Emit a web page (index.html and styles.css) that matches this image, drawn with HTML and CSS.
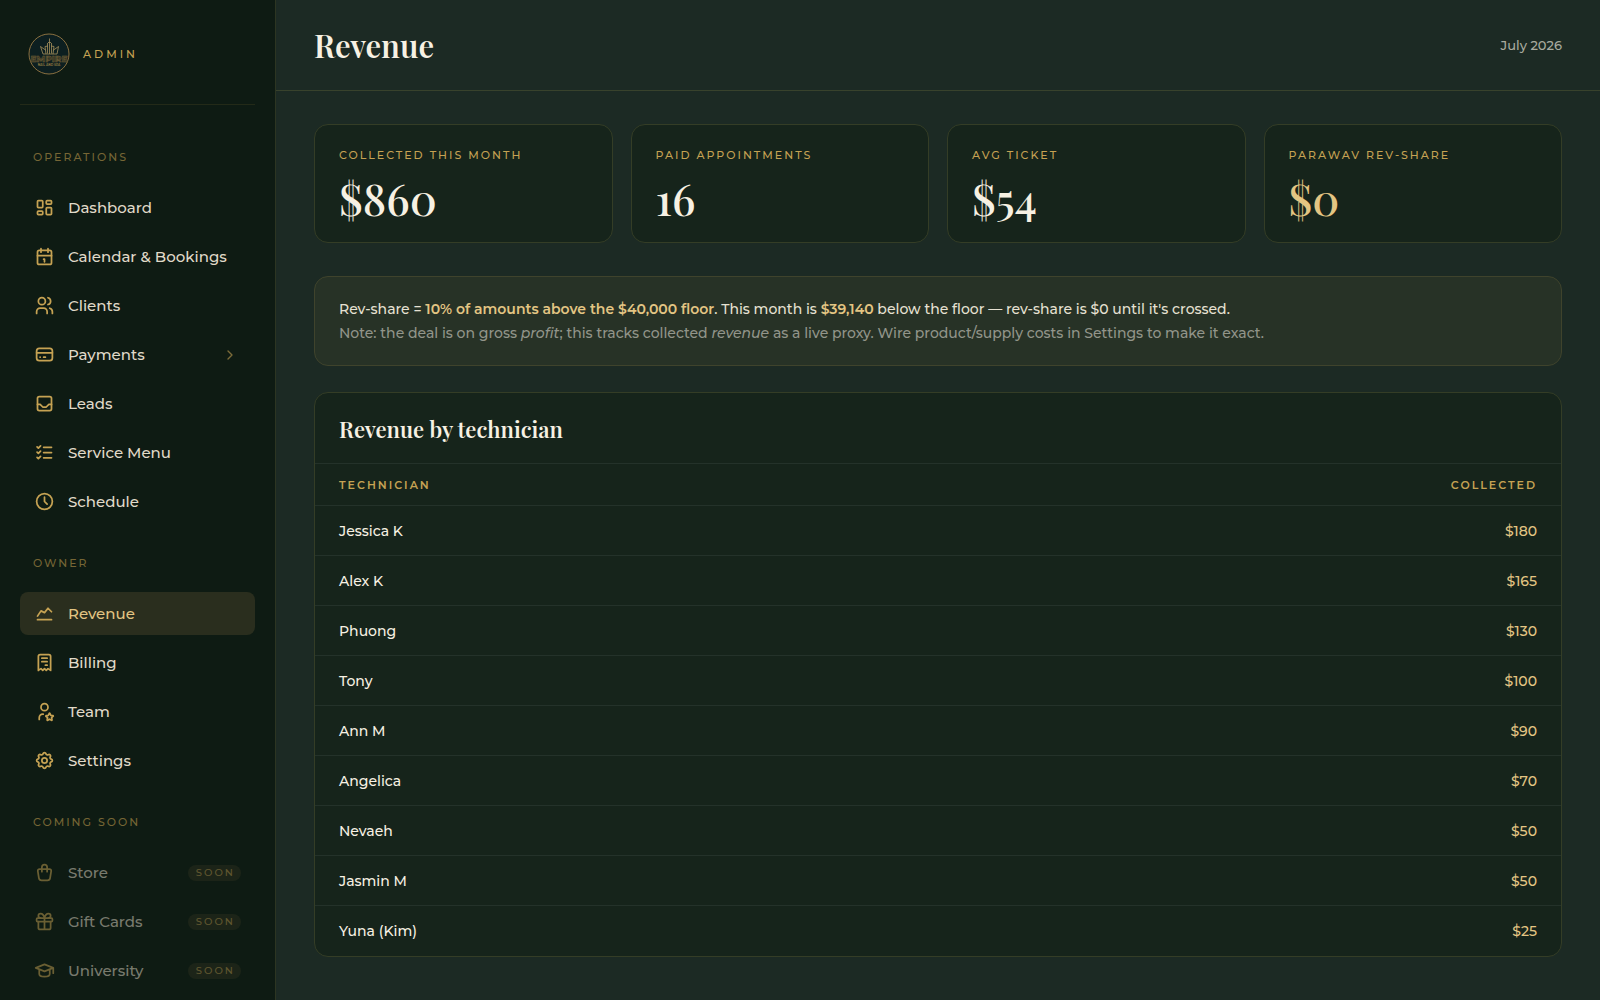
FILE: index.html
```
<!DOCTYPE html>
<html lang="en">
<head>
    <meta charset="UTF-8">
    <meta name="viewport" content="width=device-width, initial-scale=1.0">
    <title>Revenue</title>
    <link rel="stylesheet" href="styles.css">
</head>
<body>

    <div class="app">
        <aside class="sidebar">
            <div class="brand">
                <svg class="logo" viewBox="0 0 42 42">
                    <circle class="logo-ring" cx="21" cy="21" r="20"/>
                    <path class="logo-crown" d="M15 21L12.500 13.500L17.500 17L17 13.500L20 13M29 21L30.500 13.500L25.500 17L26 13.500L23 13M21.500 5.500V21M20 9.500H23M19.500 10V20.500M23.500 10V20.500M17.500 17L18 21M25.500 17L25 21M15 21H29"/>
                    <text class="logo-name" x="21" y="29" text-anchor="middle">EMPIRE</text>
                    <text class="logo-sub" x="21" y="33" text-anchor="middle">NAIL AND SPA</text>
                </svg>
                <span class="brand-role">Admin</span>
            </div>

            <!-- Operations -->
            <nav aria-label="Admin">
                <h2 class="nav-label">Operations</h2>
                <ul class="nav-list">
                    <li><a class="nav-item" href="#dashboard">
                        <svg class="icon" viewBox="0 0 24 24"><rect x="4" y="4" width="6" height="8" rx="1"/><rect x="4" y="16" width="6" height="4" rx="1"/><rect x="14" y="12" width="6" height="8" rx="1"/><rect x="14" y="4" width="6" height="4" rx="1"/></svg>
                        Dashboard</a></li>
                    <li><a class="nav-item" href="#calendar">
                        <svg class="icon" viewBox="0 0 24 24"><rect x="4" y="5" width="16" height="16" rx="2"/><path d="M16 3v4M8 3v4M4 11h16M11 15h1M12 15v3"/></svg>
                        Calendar &amp; Bookings</a></li>
                    <li><a class="nav-item" href="#clients">
                        <svg class="icon" viewBox="0 0 24 24"><circle cx="9" cy="7" r="4"/><path d="M3 21v-2a4 4 0 0 1 4 -4h4a4 4 0 0 1 4 4v2M16 3.130a4 4 0 0 1 0 7.750M21 21v-2a4 4 0 0 0 -3 -3.850"/></svg>
                        Clients</a></li>
                    <li><a class="nav-item" href="#payments">
                        <svg class="icon" viewBox="0 0 24 24"><rect x="3" y="5" width="18" height="14" rx="3"/><path d="M3 10h18M7 15h.01M11 15h2"/></svg>
                        Payments
                        <svg class="icon chevron" viewBox="0 0 24 24"><path d="M9 6l6 6l-6 6"/></svg></a></li>
                    <li><a class="nav-item" href="#leads">
                        <svg class="icon" viewBox="0 0 24 24"><rect x="4" y="4" width="16" height="16" rx="2"/><path d="M4 13h3l3 3h4l3 -3h3"/></svg>
                        Leads</a></li>
                    <li><a class="nav-item" href="#services">
                        <svg class="icon" viewBox="0 0 24 24"><path d="M3.500 5.500l1.500 1.500l2.500 -2.500M3.500 11.500l1.500 1.500l2.500 -2.500M3.500 17.500l1.500 1.500l2.500 -2.500M11 6h9M11 12h9M11 18h9"/></svg>
                        Service Menu</a></li>
                    <li><a class="nav-item" href="#schedule">
                        <svg class="icon" viewBox="0 0 24 24"><circle cx="12" cy="12" r="9"/><path d="M12 7v5l3 3"/></svg>
                        Schedule</a></li>
                </ul>

                <!-- Owner -->
                <h2 class="nav-label">Owner</h2>
                <ul class="nav-list">
                    <li><a class="nav-item active" href="#revenue" aria-current="page">
                        <svg class="icon" viewBox="0 0 24 24"><path d="M4 19h16M4 15l4 -6l4 2l4 -5l4 4"/></svg>
                        Revenue</a></li>
                    <li><a class="nav-item" href="#billing">
                        <svg class="icon" viewBox="0 0 24 24"><path d="M5 21v-16a2 2 0 0 1 2 -2h10a2 2 0 0 1 2 2v16l-3 -2l-2 2l-2 -2l-2 2l-2 -2l-3 2M9 7h6M9 11h6M13 15h2"/></svg>
                        Billing</a></li>
                    <li><a class="nav-item" href="#team">
                        <svg class="icon" viewBox="0 0 24 24"><circle cx="12" cy="7" r="4"/><path d="M6 21v-2a4 4 0 0 1 4 -4h.5M17.800 20.817l-2.172 1.138a.392 .392 0 0 1 -.568 -.41l.415 -2.411l-1.757 -1.707a.389 .389 0 0 1 .217 -.665l2.428 -.352l1.086 -2.193a.392 .392 0 0 1 .702 0l1.086 2.193l2.428 .352a.39 .39 0 0 1 .217 .665l-1.757 1.707l.414 2.410a.39 .39 0 0 1 -.567 .411l-2.172 -1.138z"/></svg>
                        Team</a></li>
                    <li><a class="nav-item" href="#settings">
                        <svg class="icon" viewBox="0 0 24 24"><path d="M10.325 4.317c.426 -1.756 2.924 -1.756 3.350 0a1.724 1.724 0 0 0 2.573 1.066c1.543 -.94 3.310 .826 2.370 2.370a1.724 1.724 0 0 0 1.065 2.572c1.756 .426 1.756 2.924 0 3.350a1.724 1.724 0 0 0 -1.066 2.573c.94 1.543 -.826 3.310 -2.370 2.370a1.724 1.724 0 0 0 -2.572 1.065c-.426 1.756 -2.924 1.756 -3.350 0a1.724 1.724 0 0 0 -2.573 -1.066c-1.543 .94 -3.310 -.826 -2.370 -2.370a1.724 1.724 0 0 0 -1.065 -2.572c-1.756 -.426 -1.756 -2.924 0 -3.350a1.724 1.724 0 0 0 1.066 -2.573c-.94 -1.543 .826 -3.310 2.370 -2.370c1 .608 2.296 .07 2.572 -1.065z"/><circle cx="12" cy="12" r="3"/></svg>
                        Settings</a></li>
                </ul>

                <!-- Not released yet -->
                <h2 class="nav-label">Coming soon</h2>
                <ul class="nav-list">
                    <li><a class="nav-item disabled" href="#store" aria-disabled="true">
                        <svg class="icon" viewBox="0 0 24 24"><path d="M6.331 8h11.339a2 2 0 0 1 1.977 2.304l-1.255 8.152a3 3 0 0 1 -2.966 2.544h-6.852a3 3 0 0 1 -2.965 -2.544l-1.255 -8.152a2 2 0 0 1 1.977 -2.304zM9 11v-5a3 3 0 0 1 6 0v5"/></svg>
                        Store
                        <span class="badge">Soon</span></a></li>
                    <li><a class="nav-item disabled" href="#giftcards" aria-disabled="true">
                        <svg class="icon" viewBox="0 0 24 24"><rect x="3" y="8" width="18" height="4" rx="1"/><path d="M12 8v13M19 12v7a2 2 0 0 1 -2 2h-10a2 2 0 0 1 -2 -2v-7M7.500 8a2.500 2.500 0 0 1 0 -5a4.800 8 0 0 1 4.500 5a4.800 8 0 0 1 4.500 -5a2.500 2.500 0 0 1 0 5"/></svg>
                        Gift Cards
                        <span class="badge">Soon</span></a></li>
                    <li><a class="nav-item disabled" href="#university" aria-disabled="true">
                        <svg class="icon" viewBox="0 0 24 24"><path d="M22 9l-10 -4l-10 4l10 4l10 -4v6M6 10.600v5.400a6 3 0 0 0 12 0v-5.400"/></svg>
                        University
                        <span class="badge">Soon</span></a></li>
                </ul>
            </nav>
        </aside>

        <main class="main">
            <header class="topbar">
                <h1>Revenue</h1>
                <span class="period">July 2026</span>
            </header>

            <div class="content">
                <section class="stats">
                    <div class="card stat">
                        <span class="stat-label">Collected this month</span>
                        <span class="stat-value">$860</span>
                    </div>
                    <div class="card stat">
                        <span class="stat-label">Paid appointments</span>
                        <span class="stat-value">16</span>
                    </div>
                    <div class="card stat">
                        <span class="stat-label">Avg ticket</span>
                        <span class="stat-value">$54</span>
                    </div>
                    <div class="card stat">
                        <span class="stat-label">Parawav rev-share</span>
                        <span class="stat-value gold">$0</span>
                    </div>
                </section>

                <section class="card notice">
                    <p>Rev-share = <strong>10% of amounts above the $40,000 floor</strong>. This month is <strong>$39,140</strong> below the floor — rev-share is $0 until it's crossed.</p>
                    <p class="muted">Note: the deal is on gross <em>profit</em>; this tracks collected <em>revenue</em> as a live proxy. Wire product/supply costs in Settings to make it exact.</p>
                </section>

                <section class="card panel">
                    <h2 class="panel-title">Revenue by technician</h2>
                    <table>
                        <thead>
                            <tr><th scope="col">Technician</th><th scope="col">Collected</th></tr>
                        </thead>
                        <tbody>
                            <tr><td>Jessica K</td><td>$180</td></tr>
                            <tr><td>Alex K</td><td>$165</td></tr>
                            <tr><td>Phuong</td><td>$130</td></tr>
                            <tr><td>Tony</td><td>$100</td></tr>
                            <tr><td>Ann M</td><td>$90</td></tr>
                            <tr><td>Angelica</td><td>$70</td></tr>
                            <tr><td>Nevaeh</td><td>$50</td></tr>
                            <tr><td>Jasmin M</td><td>$50</td></tr>
                            <tr><td>Yuna (Kim)</td><td>$25</td></tr>
                        </tbody>
                    </table>
                </section>
            </div>
        </main>
    </div>

</body>
</html>
```
FILE: styles.css
```
:root {
    --bg: #1c2a24;
    --sidebar: #0e1b13;
    --card: #16241b;
    --cream: #f7f1e3;
    --gold: #c5a253;
    --gold-light: #e3c583;
    --line: #343d26;
    --row-line: #24322a;
}

* {
    box-sizing: border-box;
}

body {
    margin: 0;
    background-color: var(--bg);
    color: var(--cream);
    font-family: Montserrat, Inter, sans-serif;
    font-size: 14px;
    font-weight: 500;
    line-height: 24px;
}

h1, h2, p, ul {
    margin: 0;
    padding: 0;
}

.app {
    display: flex;
    min-height: 100vh;
}

/* Sidebar */
.sidebar {
    flex: 0 0 276px;
    height: 100vh;
    padding: 0 20px;
    overflow: hidden;
    position: sticky;
    top: 0;
    background-color: var(--sidebar);
    border-right: 1px solid #2c3522;
}

.brand {
    display: flex;
    align-items: center;
    gap: 13px;
    padding: 33px 8px 29px;
    border-bottom: 1px solid #232a18;
    margin-bottom: 44px;
}

.logo {
    width: 42px;
    height: 42px;
}

.logo-ring {
    fill: #0d1f20;
    stroke: #8a7040;
}

.logo-crown {
    fill: none;
    stroke: #a48f5c;
    stroke-width: 0.8;
}

.logo-name {
    fill: #3b3a26;
    stroke: #77643a;
    stroke-width: 0.4;
    font-size: 9px;
    font-weight: 800;
}

.logo-sub {
    fill: #85713f;
    font-size: 3px;
    font-weight: 700;
}

.brand-role {
    color: var(--gold);
    font-size: 11px;
    letter-spacing: 3px;
    text-transform: uppercase;
}

.nav-label {
    padding: 0 13px;
    margin-bottom: 21px;
    color: #766635;
    font-size: 11px;
    font-weight: 500;
    line-height: 16px;
    letter-spacing: 2px;
    text-transform: uppercase;
}

.nav-list {
    display: flex;
    flex-direction: column;
    gap: 6px;
    margin-bottom: 32px;
    list-style: none;
}

.nav-item {
    display: flex;
    align-items: center;
    gap: 13px;
    height: 43px;
    padding: 0 14px;
    border-radius: 8px;
    color: #e0dac9;
    font-size: 15px;
    text-decoration: none;
}

    .nav-item:hover {
        background-color: #1a2418;
    }

    .nav-item.active {
        background-color: #2a2e1e;
        color: var(--gold-light);
    }

    .nav-item.disabled {
        opacity: 0.5;
    }

.icon {
    flex: none;
    width: 21px;
    height: 21px;
    fill: none;
    stroke: var(--gold);
    stroke-width: 2;
    stroke-linecap: round;
    stroke-linejoin: round;
}

.chevron {
    width: 16px;
    height: 16px;
    margin-left: auto;
    margin-right: 3px;
    opacity: 0.6;
}

.badge {
    padding: 0 6px 0 8px;
    margin-left: auto;
    border-radius: 8px;
    background-color: #2a2e1e;
    color: #b0914b;
    font-size: 10px;
    line-height: 16px;
    letter-spacing: 2px;
    text-transform: uppercase;
}

/* Main area */
.main {
    flex: 1;
    min-width: 0;
}

.topbar {
    display: flex;
    justify-content: space-between;
    align-items: center;
    height: 91px;
    padding: 0 38px;
    border-bottom: 1px solid #38422c;
}

h1, .panel-title, .stat-value {
    font-family: "Playfair Display", "Liberation Serif", serif;
    font-weight: 600;
}

h1 {
    font-size: 31px;
    line-height: 40px;
}

.period {
    color: #a8aa9f;
    font-size: 13px;
}

.content {
    padding: 33px 38px 43px;
}

.card {
    background-color: var(--card);
    border: 1px solid var(--line);
    border-radius: 14px;
}

.stats {
    display: grid;
    grid-template-columns: repeat(4, 1fr);
    gap: 18px;
    margin-bottom: 33px;
}

.stat {
    display: flex;
    flex-direction: column;
    gap: 6px;
    padding: 21px 24px 16px;
}

.stat-label {
    color: var(--gold);
    font-size: 11px;
    line-height: 18px;
    letter-spacing: 2px;
    text-transform: uppercase;
}

.stat-value {
    font-size: 44px;
    font-weight: 500;
    line-height: 56px;
}

.gold {
    color: var(--gold-light);
}

.notice {
    padding: 20px 24px;
    margin-bottom: 26px;
    background-color: #273226;
    border-color: #3f432c;
}

    .notice p {
        color: #e6e1d2;
    }

    .notice strong {
        color: var(--gold-light);
        font-weight: 600;
    }

    .notice .muted {
        color: #92958a;
    }

.panel {
    overflow: hidden;
}

.panel-title {
    padding: 21px 24px 19px;
    font-size: 22px;
    line-height: 30px;
}

table {
    width: 100%;
    border-collapse: collapse;
}

th, td {
    padding: 0 24px;
    border-top: 1px solid var(--row-line);
    text-align: left;
}

    th:last-child, td:last-child {
        text-align: right;
    }

th {
    height: 42px;
    color: var(--gold);
    font-size: 11px;
    font-weight: 600;
    letter-spacing: 2px;
    text-transform: uppercase;
}

td {
    height: 50px;
}

    td:last-child {
        color: var(--gold-light);
    }
```
